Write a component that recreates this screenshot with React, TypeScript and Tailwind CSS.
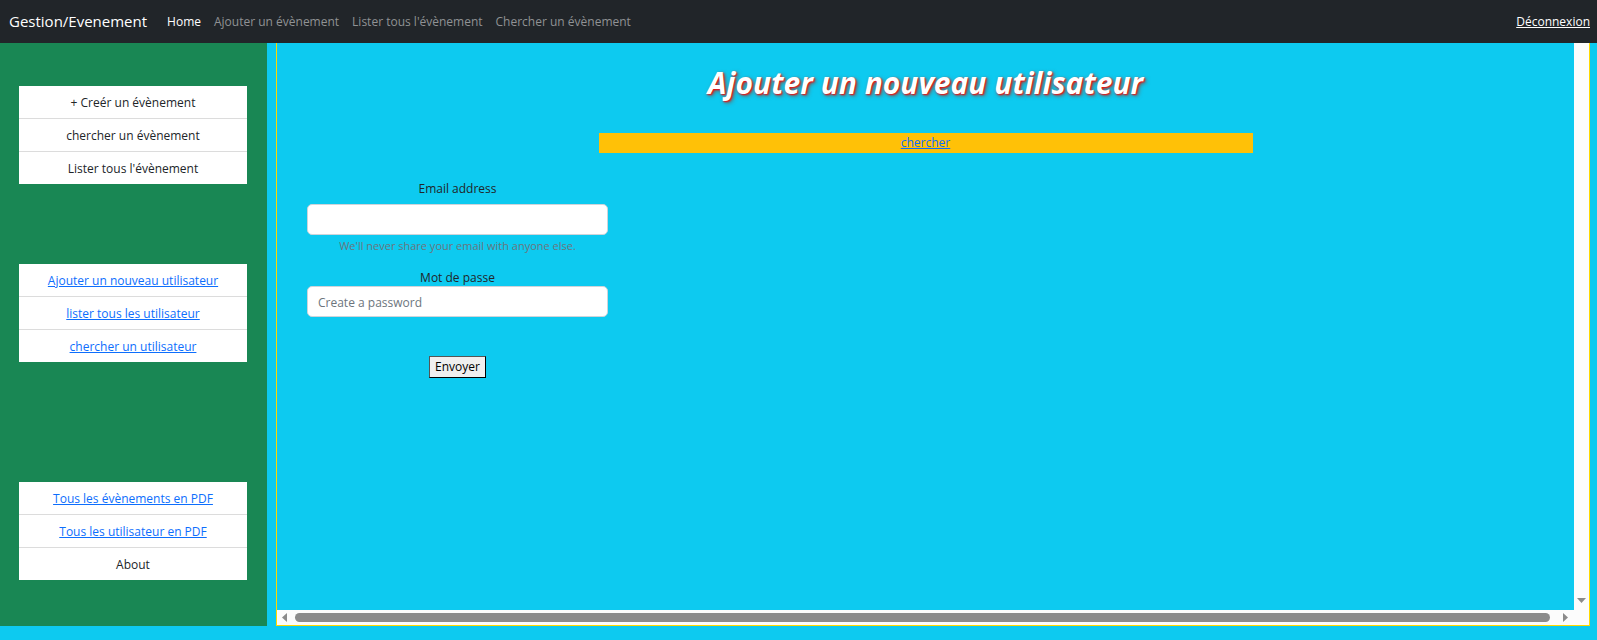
import type { ReactNode } from "react";

function MenuList({ children, label }: { children: ReactNode; label: string }) {
  return (
    <ul aria-label={label} className="divide-y divide-[#dcdcdc] bg-white text-center">
      {children}
    </ul>
  );
}

function MenuItem({ text, linked = false }: { text: string; linked?: boolean }) {
  return (
    <li className="flex h-8 items-center justify-center pt-0.5 not-last:h-[33px]">
      {linked ? (
        <a href="#" className="text-[#0d6efd] underline">
          {text}
        </a>
      ) : (
        <span>{text}</span>
      )}
    </li>
  );
}

function Navbar() {
  return (
    <nav className="flex h-[43px] items-center bg-[#212529] pr-[7px] pl-[9px] text-[#909294]">
      <a href="#" className="mr-5 pb-0.5 text-[15px] text-white">
        Gestion/Evenement
      </a>
      <div className="flex gap-[13px]">
        <a href="#" className="text-white">Home</a>
        <a href="#">Ajouter un évènement</a>
        <a href="#">Lister tous l'évènement</a>
        <a href="#">Chercher un évènement</a>
      </div>
      <a href="#" className="ml-auto text-white underline">
        Déconnexion
      </a>
    </nav>
  );
}

function Sidebar() {
  return (
    <aside className="flex w-[267px] shrink-0 flex-col bg-[#198754] pt-[43px] pr-5 pb-[46px] pl-[19px]">
      <MenuList label="Évènements">
        <MenuItem text="+ Creér un évènement" />
        <MenuItem text="chercher un évènement" />
        <MenuItem text="Lister tous l'évènement" />
      </MenuList>
      <div className="mt-20">
        <MenuList label="Utilisateurs">
          <MenuItem linked text="Ajouter un nouveau utilisateur" />
          <MenuItem linked text="lister tous les utilisateur" />
          <MenuItem linked text="chercher un utilisateur" />
        </MenuList>
      </div>
      <div className="mt-[120px]">
        <MenuList label="Documents">
          <MenuItem linked text="Tous les évènements en PDF" />
          <MenuItem linked text="Tous les utilisateur en PDF" />
          <MenuItem text="About" />
        </MenuList>
      </div>
    </aside>
  );
}

function UserForm() {
  const field =
    "h-[31px] w-full rounded-[5px] border border-[#ced4da] bg-white px-2.5 placeholder:text-[#6c757d] focus:outline-none";
  return (
    <form className="ml-[30px] flex w-[301px] flex-col items-center pt-[26px]" onSubmit={(e) => e.preventDefault()}>
      <label htmlFor="email" className="mb-[5px]">
        Email address
      </label>
      <input id="email" type="email" aria-describedby="email-help" className={field} />
      <small id="email-help" className="mt-[3px] text-[11px] leading-4 text-[#6c757d]">
        We'll never share your email with anyone else.
      </small>
      <label htmlFor="password" className="mt-3.5 -mb-0.5">
        Mot de passe
      </label>
      <input id="password" type="password" placeholder="Create a password" className={`${field} pt-0.5`} />
      <button
        type="submit"
        className="mt-[39px] h-[22px] border border-t-[#555] border-r-black border-b-black border-l-[#555] bg-[#efefef] px-[5px] leading-5 text-black"
      >
        Envoyer
      </button>
    </form>
  );
}

function HorizontalScrollbar() {
  return (
    <div className="flex h-[15px] items-center bg-[#fcfcfc] pr-[21px] pl-[5px]">
      <svg width="5" height="9" viewBox="0 0 5 9" className="mr-2 shrink-0 fill-[#8b8b8b]" aria-hidden="true">
        <path d="M5 0v9L0 4.5z" />
      </svg>
      <div className="h-[9px] grow rounded-full bg-[#8b8b8b]" />
      <svg width="5" height="9" viewBox="0 0 5 9" className="ml-[13px] shrink-0 fill-[#8b8b8b]" aria-hidden="true">
        <path d="M0 0v9l5-4.5z" />
      </svg>
    </div>
  );
}

export default function App() {
  return (
    <div className="flex min-h-screen flex-col bg-[#0dcaf0] pb-3.5 font-['Open_Sans','Noto_Sans',sans-serif] text-[12px] leading-5 text-[#212529]">
      <Navbar />
      <div className="flex grow pr-[7px]">
        <Sidebar />
        <main className="ml-[9px] flex min-w-0 grow flex-col border border-t-0 border-[#ffd800]">
          <div className="flex grow">
            <section className="min-w-0 grow">
              <h1 className="pt-5 text-center text-[30px] leading-10 font-bold text-white italic [text-shadow:1px_1px_2px_#ff0000,2px_2px_4px_#666666]">
                Ajouter un nouveau utilisateur
              </h1>
              <div className="mx-auto mt-[30px] w-[654px] max-w-full bg-[#ffc107] text-center">
                <a href="#" className="text-[#0d6efd] underline">
                  chercher
                </a>
              </div>
              <UserForm />
            </section>
            <div className="flex w-[15px] shrink-0 flex-col items-center justify-end bg-[#fcfcfc] pb-[7px]">
              <svg width="9" height="5" viewBox="0 0 9 5" className="fill-[#8b8b8b]" aria-hidden="true">
                <path d="M0 0h9L4.5 5z" />
              </svg>
            </div>
          </div>
          <HorizontalScrollbar />
        </main>
      </div>
    </div>
  );
}
